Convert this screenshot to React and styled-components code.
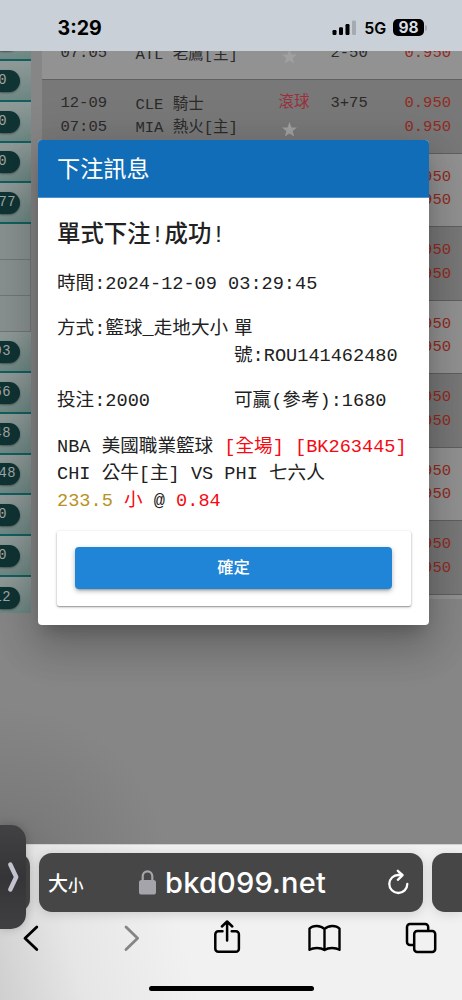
import React from 'react';
import styled, { createGlobalStyle } from 'styled-components';

const mono = `'Liberation Mono', 'Noto Sans CJK TC', monospace`;
const sans = `Inter, 'Noto Sans CJK TC', sans-serif`;

const GlobalStyle = createGlobalStyle`
  * {
    box-sizing: border-box;
  }

  body {
    margin: 0;
    overflow: hidden;
  }
`;

const Screen = styled.div`
  position: relative;
  display: flex;
  flex-direction: column;
  width: 462px;
  height: 1000px;
  overflow: hidden;
  font-family: ${mono};
`;

/* status bar */

const StatusBar = styled.header`
  display: flex;
  align-items: center;
  justify-content: space-between;
  height: 51px;
  padding: 5px 35px 0 57.5px;
  background: #c9d0d8;
  color: #000;
  font-family: ${sans};
`;

const Clock = styled.span`
  font-size: 19.6px;
  font-weight: 700;
`;

const StatusIcons = styled.div`
  display: flex;
  align-items: center;
`;

const Network = styled.span`
  margin: 0 7px;
  font-size: 16px;
  font-weight: 600;
  letter-spacing: -0.2px;
`;

const Battery = styled.span`
  width: 31px;
  height: 17px;
  margin-bottom: 1px;
  border-radius: 5px;
  background: #000;
  color: #d6dde4;
  font-size: 15.5px;
  font-weight: 700;
  line-height: 17px;
  text-align: center;
`;

const BatteryNub = styled.span`
  width: 2px;
  height: 6px;
  margin-left: 1px;
  border-radius: 0 2px 2px 0;
  background: #a5abb3;
`;

/* dimmed page behind the dialog */

const Page = styled.main`
  display: flex;
  align-items: flex-start;
  height: 793px;
  overflow: hidden;
  background: radial-gradient(circle at 0 104%, #6c6c6c 0, #7b7b7b 70px, #868686 170px);
`;

const Sidebar = styled.aside`
  flex: none;
  width: 31px;
  margin-top: -30.75px;
`;

const SideItem = styled.div`
  display: flex;
  align-items: center;
  height: ${props => (props.$last ? '36.5px' : '40.75px')};
  padding-top: ${props => (props.$last ? '5px' : '1px')};
  border-bottom: ${props => (props.$last ? 'none' : '2.5px solid #125f5f')};
  background: linear-gradient(170deg, #8e9997 10%, #6b8682 100%);
`;

const Count = styled.span`
  display: flex;
  justify-content: flex-end;
  width: 20px;
  height: 22px;
  padding-right: ${props => props.$pad}px;
  border-radius: 0 11px 11px 0;
  background: #103334;
  box-shadow: 0 1px 2px rgba(0, 0, 0, 0.4);
  color: #a0a6a5;
  font-size: 13.8px;
  line-height: 21px;
  letter-spacing: 0.5px;
  white-space: nowrap;
`;

const SideCell = styled.div`
  height: 36.1px;
  border-right: 1px solid #777;
  border-bottom: 1.5px solid #747676;
  background: #889190;
`;

const OddsTable = styled.div`
  flex: 1;
  margin: -44.5px 0 0 11px;
  border-bottom: 4px solid #929292;
`;

const OddsRow = styled.div`
  display: grid;
  grid-template-columns: 75px 143px 52px 74px 60px;
  height: 73.5px;
  padding: 12px 0 0 18.5px;
  border-bottom: 1.5px solid #606060;
  background: ${props => (props.$dark ? '#787878' : '#929292')};
  color: #2a2a2a;
  font-size: 15.5px;
  line-height: 23.6px;
  white-space: nowrap;
`;

const OddsCell = styled.div`
  padding-top: ${props => (props.$low ? 1.5 : 0)}px;
  color: ${props => (props.$odds ? '#932a20' : 'inherit')};
`;

const Live = styled.div`
  height: 26px;
  color: #9b2f3a;
`;

const StarBox = styled.div`
  display: flex;
  padding-left: 2px;
`;

/* dialog */

const Dialog = styled.section`
  position: absolute;
  top: 139.5px;
  left: 38px;
  width: 391px;
  height: 485px;
  border-radius: 4px;
  overflow: hidden;
  background: #fff;
  box-shadow: 0 11px 15px -7px rgba(0, 0, 0, 0.2), 0 24px 38px 3px rgba(0, 0, 0, 0.14),
    0 9px 46px 8px rgba(0, 0, 0, 0.12);
  color: #212121;
`;

const DialogTitle = styled.h2`
  height: 58px;
  margin: 0;
  padding-left: 19px;
  border-bottom: 1px solid #4a93d0;
  background: #116db7;
  color: #fff;
  font-size: 23.2px;
  font-weight: 400;
  line-height: 62px;
`;

const DialogBody = styled.div`
  padding: 19px 18px 0 19px;
  font-size: 18.6px;
  line-height: 27px;
`;

const Result = styled.h3`
  margin: 0 0 15px;
  font-size: 23.4px;
  font-weight: 500;
  line-height: 39px;
`;

const Info = styled.div`
  display: grid;
  grid-template-columns: 177px 1fr;
  row-gap: 18px;
  margin-bottom: 19.5px;
`;

const InfoItem = styled.div`
  grid-column: ${props => (props.$wide ? '1 / -1' : 'auto')};
  white-space: nowrap;
`;

const Ticket = styled.div`
  line-height: 27px;
  white-space: nowrap;
`;

const Red = styled.span`
  color: #f50a12;
`;

const Gold = styled.span`
  color: #b8921c;
`;

const Actions = styled.div`
  height: 75px;
  margin-top: 15.5px;
  padding: 16px 19px 0 18px;
  border-radius: 2px;
  box-shadow: 0 1px 3px rgba(0, 0, 0, 0.3), 0 1px 1px rgba(0, 0, 0, 0.2);
`;

const ConfirmButton = styled.button`
  width: 100%;
  height: 42px;
  padding: 0 0 3px;
  border: none;
  border-radius: 4px;
  background: #2085d6;
  box-shadow: 0 3px 2px -2px rgba(0, 0, 0, 0.2), 0 2px 5px rgba(0, 0, 0, 0.3);
  color: #fff;
  font-family: ${mono};
  font-size: 16.3px;
  font-weight: 500;
`;

/* browser chrome */

const Browser = styled.footer`
  height: 156px;
  padding-top: 8px;
  border-top: 1px solid #d0d0d0;
  background: linear-gradient(75deg, #cfcfcf 0%, #e6e6e6 17%, #f1f1f1 40%, #f1f1f1 100%);
`;

const TabStrip = styled.div`
  display: flex;
  gap: 9px;
  height: 59px;
`;

const Tab = styled.div`
  flex: none;
  width: 30px;
  border-radius: ${props => (props.$left ? '0 13px 13px 0' : '13px 0 0 13px')};
  background: #464646;
  box-shadow: 0 2px 12px rgba(0, 0, 0, 0.12);
`;

const AddressBar = styled.div`
  display: flex;
  flex: none;
  align-items: center;
  width: 384px;
  padding: 0 14px 0 9px;
  border-radius: 13px;
  background: #464646;
  box-shadow: 0 2px 12px rgba(0, 0, 0, 0.15);
  color: #fff;
  font-family: ${sans};
`;

const TextSize = styled.span`
  width: 91px;
  font-size: 20px;
  font-weight: 500;

  small {
    font-size: 15.5px;
  }
`;

const Url = styled.span`
  flex: 1;
  padding-left: 9px;
  font-size: 29px;
  font-weight: 500;
  letter-spacing: 0.2px;
`;

const Toolbar = styled.nav`
  display: flex;
  gap: 63.5px;
  height: 53px;
  padding: 7px 0 0 14px;
`;

const HomeIndicator = styled.div`
  width: 165px;
  height: 5px;
  margin: 21px auto 0;
  border-radius: 3px;
  background: #000;
`;

const SlideOver = styled.div`
  position: absolute;
  top: 825px;
  left: 0;
  display: flex;
  align-items: center;
  width: 26px;
  height: 104px;
  padding-left: 6px;
  border-radius: 0 15px 15px 0;
  background: linear-gradient(#424244, #353537 50%, #404042);
  box-shadow: 0 0 10px rgba(0, 0, 0, 0.2);
`;

const Icon = ({ width = 34, height = 40, children, color = '#000', stroke = 2.8 }) => (
  <svg
    width={width}
    height={height}
    viewBox={`0 0 ${width} ${height}`}
    fill="none"
    stroke={color}
    strokeWidth={stroke}
    strokeLinecap="round"
    strokeLinejoin="round"
  >
    {children}
  </svg>
);

const Star = () => (
  <svg width="17" height="26" viewBox="0 0 17 26" fill="#a0a0a0">
    <path d="M8.5 4 L10.5 9.4 L16 9.6 L11.7 13.1 L13.2 18.5 L8.5 15.4 L3.8 18.5 L5.3 13.1 L1 9.6 L6.5 9.4 Z" />
  </svg>
);

const Signal = () => (
  <svg width="25" height="16" viewBox="0 0 25 16">
    <rect x="0.5" y="10" width="4" height="5" rx="1.2" />
    <rect x="7" y="7.3" width="4" height="7.7" rx="1.2" />
    <rect x="13.5" y="4" width="4" height="11" rx="1.2" />
    <rect x="20" y="0.5" width="4" height="14.5" rx="1.2" fill="#a4abb2" />
  </svg>
);

const Lock = () => (
  <svg width="17" height="25" viewBox="0 0 17 25">
    <path d="M3.7 11 V6.3 a4.8 5 0 0 1 9.6 0 V11" fill="none" stroke="#a5a4ab" strokeWidth="2.2" />
    <rect x="0" y="10" width="17" height="14.5" rx="2.6" fill="#a5a4ab" />
  </svg>
);

const sideTop = [
  { text: '', pad: 13 },
  { text: '0', pad: 13 },
  { text: '0', pad: 13 },
  { text: '0', pad: 13 },
  { text: '77', pad: 4 },
];

const sideBottom = [
  { text: '93', pad: 9 },
  { text: '66', pad: 9 },
  { text: '48', pad: 9 },
  { text: '48', pad: 4 },
  { text: '0', pad: 13 },
  { text: '0', pad: 13 },
  { text: '12', pad: 9 },
];

const rows = [
  { time: '07:05', home: 'ATL 老鷹[主]', line: ['', '2-50'], odds: ['', '0.950'] },
  {
    date: '12-09',
    time: '07:05',
    away: 'CLE 騎士',
    home: 'MIA 熱火[主]',
    live: '滾球',
    line: ['3+75', ''],
  },
  {},
  {},
  {},
  {},
  {},
  {},
];

const App = () => {
  return (
    <Screen>
      <GlobalStyle />

      <StatusBar>
        <Clock>3:29</Clock>
        <StatusIcons>
          <Signal />
          <Network>5G</Network>
          <Battery>98</Battery>
          <BatteryNub />
        </StatusIcons>
      </StatusBar>

      <Page>
        <Sidebar>
          {sideTop.map((item, i) => (
            <SideItem key={i}>
              <Count $pad={item.pad}>{item.text}</Count>
            </SideItem>
          ))}
          <SideCell />
          <SideCell />
          <SideCell />
          {sideBottom.map((item, i) => (
            <SideItem key={i} $last={i === sideBottom.length - 1}>
              <Count $pad={item.pad}>{item.text}</Count>
            </SideItem>
          ))}
        </Sidebar>

        <OddsTable>
          {rows.map(({ date, time, away, home, live, line = [], odds = ['0.950', '0.950'] }, i) => (
            <OddsRow key={i} $dark={i % 2 === 1}>
              <OddsCell>
                {date}
                <br />
                {time}
              </OddsCell>
              <OddsCell $low>
                {away}
                <br />
                {home}
              </OddsCell>
              <OddsCell>
                <Live>{live}</Live>
                <StarBox>{time && <Star />}</StarBox>
              </OddsCell>
              <OddsCell>
                {line[0]}
                <br />
                {line[1]}
              </OddsCell>
              <OddsCell $odds>
                {odds[0]}
                <br />
                {odds[1]}
              </OddsCell>
            </OddsRow>
          ))}
        </OddsTable>
      </Page>

      <Browser>
        <TabStrip>
          <Tab $left />
          <AddressBar>
            <TextSize>
              大<small>小</small>
            </TextSize>
            <Lock />
            <Url>bkd099.net</Url>
            <Icon width={22} height={27} color="#fff" stroke={2.3}>
              <path d="M11.5 6 A9 9 0 1 0 20.3 15" />
              <path d="M10.8 1.8 L15.6 6.2 L10.8 10.8" />
              <path d="M11.5 6 H15" />
            </Icon>
          </AddressBar>
          <Tab />
        </TabStrip>
        <Toolbar>
          <Icon>
            <path d="M22.8 8 L11 19.3 L22.8 30.6" />
          </Icon>
          <Icon color="#858585">
            <path d="M14 8 L25.6 19.3 L14 30.6" />
          </Icon>
          <Icon stroke={2.5}>
            <path d="M13.5 12.2 H9.3 a3 3 0 0 0 -3 3 V29.8 a3 3 0 0 0 3 3 H26.9 a3 3 0 0 0 3 -3 V15.2 a3 3 0 0 0 -3 -3 H22.7" />
            <path d="M18.1 21.5 V3.5 M12.9 7.5 L18.1 2.5 L23.3 7.5" />
          </Icon>
          <Icon stroke={2.4}>
            <path d="M17.5 31 C13.5 28.3 6.5 28.3 2.5 30.8 V9.5 C6 6 13.5 6 17.5 10 V31 C21.5 28.3 28.5 28.3 32.5 30.8 V9.5 C29 6 21.5 6 17.5 10" />
          </Icon>
          <Icon stroke={2.5}>
            <path d="M9.5 26 H6 a3 3 0 0 1 -3 -3 V8 a3 3 0 0 1 3 -3 H21.2 a3 3 0 0 1 3 3 V11" />
            <rect x="10.2" y="12" width="21" height="21" rx="3" />
          </Icon>
        </Toolbar>
        <HomeIndicator />
      </Browser>

      <SlideOver>
        <Icon width={14} height={32} color="#c3c3cf" stroke={4.4}>
          <path d="M4.3 3.5 L10.2 16 L4.3 28.5" />
        </Icon>
      </SlideOver>

      <Dialog>
        <DialogTitle>下注訊息</DialogTitle>
        <DialogBody>
          <Result>單式下注!成功!</Result>
          <Info>
            <InfoItem $wide>時間:2024-12-09 03:29:45</InfoItem>
            <InfoItem>方式:籃球_走地大小</InfoItem>
            <InfoItem>
              單
              <br />
              號:ROU141462480
            </InfoItem>
            <InfoItem>投注:2000</InfoItem>
            <InfoItem>可贏(參考):1680</InfoItem>
          </Info>
          <Ticket>
            NBA 美國職業籃球 <Red>[全場] [BK263445]</Red>
            <br />
            CHI 公牛[主] VS PHI 七六人
            <br />
            <Gold>233.5</Gold> <Red>小</Red> @ <Red>0.84</Red>
          </Ticket>
          <Actions>
            <ConfirmButton>確定</ConfirmButton>
          </Actions>
        </DialogBody>
      </Dialog>
    </Screen>
  );
};

export default App;
